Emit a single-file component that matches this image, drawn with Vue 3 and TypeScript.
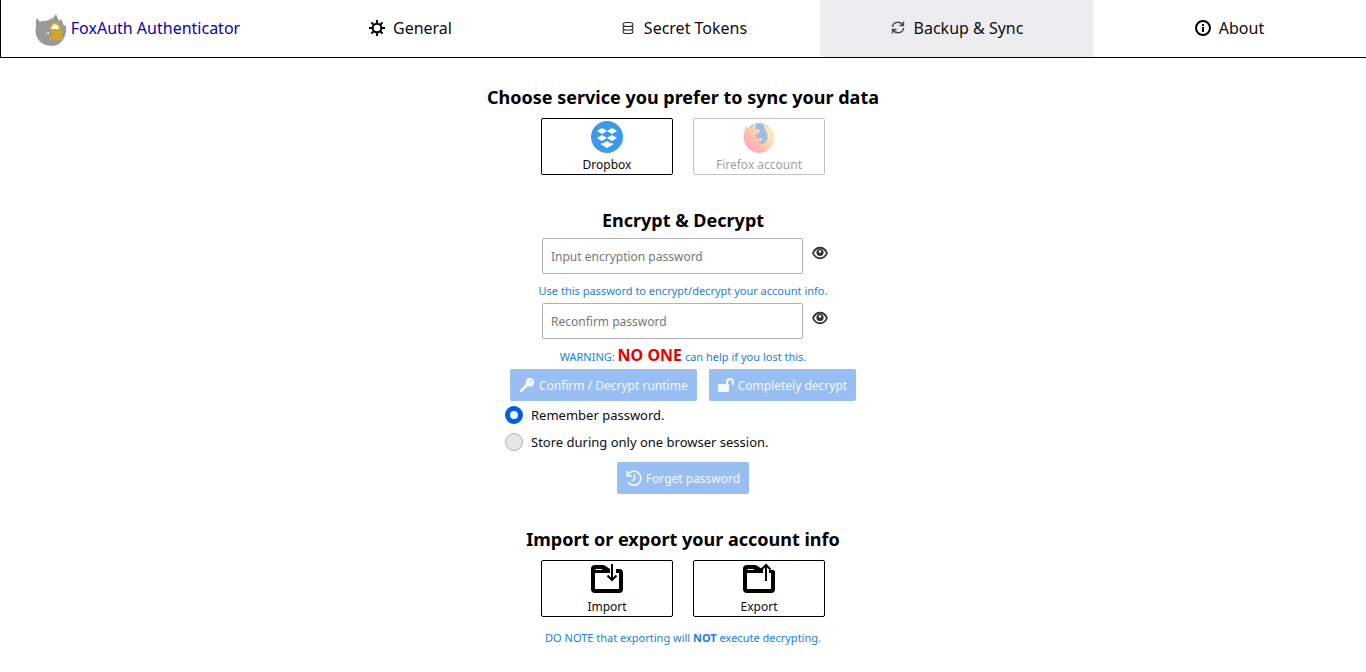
<script setup lang="ts">
import { ref } from 'vue'

const password = ref('')
const confirmation = ref('')
const storage = ref<'remember' | 'session'>('remember')
const shown = ref({ password: false, confirmation: false })
</script>

<template>
  <div class="page">
    <nav class="nav">
      <a class="brand" href="#home">
        <svg class="logo" viewBox="0 0 32 32" aria-hidden="true">
          <path fill="#999" d="M2 4 5 8Q8 6 11 7L18 4 17 8Q18 3 21 0Q22 3 24 7L26 5Q28 8 29 12L31 11Q32 17 30 22Q26 32 16 32Q5 32 1 21Q0 16 1 11Q0 8 2 4Z" />
          <path fill="#fff" d="M16 15Q17 10 20 10Q24 11 24 15ZM11 19 14 18V20Z" />
          <path fill="none" stroke="#d7a51b" stroke-width="2" d="M15 15V14Q16 9 20 9Q25 9 25 15V17" />
          <path fill="#d7a51b" d="M18 15H26Q27 15 27 17V26H14V23L18 21V19L14 18Z" />
        </svg>
        <span>FoxAuth Authenticator</span>
      </a>
      <a class="tab" href="#general">
        <svg class="icon" viewBox="0 0 16 16" aria-hidden="true">
          <g fill="none" stroke="#000" stroke-width="2">
            <circle cx="8" cy="8" r="4.300" />
            <path d="M8 0v4M8 12v4M0 8h4M12 8h4M2.400 2.400l2.800 2.800M10.800 10.800l2.800 2.800M13.600 2.400l-2.800 2.800M5.200 10.800l-2.800 2.800" />
          </g>
        </svg>
        <span>General</span>
      </a>
      <a class="tab" href="#tokens">
        <svg class="icon" viewBox="0 0 16 16" aria-hidden="true">
          <g fill="none" stroke="#222" stroke-width="1.1">
            <rect x="3" y="2.500" width="10" height="4" rx="4" ry="2" />
            <path d="M4 6C2.500 7 2.500 10 6 10h4c3.500 0 3.500-3 2-4M4 9.400C2.500 11 2.500 13.500 6 13.500h4c3.500 0 3.500-2.500 2-4.100" />
          </g>
        </svg>
        <span>Secret Tokens</span>
      </a>
      <a class="tab active" href="#backup" aria-current="page">
        <svg class="icon" viewBox="0 0 16 16" aria-hidden="true">
          <g fill="none" stroke="#444" stroke-width="1.4">
            <path d="M2.500 7C3 1.500 10 .8 13 5M13.500 1.500V5.500H9.500M13.500 8C13 13.500 6 14.200 3 10M2.500 13.500v-4h4" />
          </g>
        </svg>
        <span>Backup &amp; Sync</span>
      </a>
      <a class="tab" href="#about">
        <svg class="icon" viewBox="0 0 16 16" aria-hidden="true">
          <circle cx="8" cy="8" r="7" fill="none" stroke="#000" stroke-width="2" />
          <path fill="#000" d="M7 4h2v2H7zM7 7h2v5H7z" />
        </svg>
        <span>About</span>
      </a>
    </nav>

    <main class="content">
      <section>
        <h2>Choose service you prefer to sync your data</h2>
        <div class="cards">
          <button class="card" type="button">
            <svg class="card-icon" viewBox="0 0 32 32" aria-hidden="true">
              <circle cx="16" cy="16" r="16" fill="#3d9ae8" />
              <path fill="#fff" d="M11 7 16 10 11 13 6 10ZM21 7 26 10 21 13 16 10ZM11 14 16 17 11 20 6 17ZM21 14 26 17 21 20 16 17ZM10 22 12 22.500 16 20 20 22.500 22 22V23.500L16 27 10 23.500Z" />
            </svg>
            <span>Dropbox</span>
          </button>
          <button class="card" type="button" disabled>
            <svg class="card-icon" viewBox="0 0 32 32" aria-hidden="true">
              <defs>
                <linearGradient id="fox" x1="0.9" y1="0.1" x2="0.15" y2="0.8">
                  <stop offset="0" stop-color="#ffe23a" />
                  <stop offset="0.4" stop-color="#ffb52c" />
                  <stop offset="0.7" stop-color="#ff5f30" />
                  <stop offset="1" stop-color="#f52b60" />
                </linearGradient>
              </defs>
              <circle cx="16" cy="15" r="13" fill="#0b62cc" />
              <path fill="url(#fox)" d="M3 5Q4 7 6 7L9 6Q11 3 13 3L12 8 17 9 16 12 13 14Q11 17 15 18Q18 16 20 18Q18 21 14 21Q21 26 24 19Q26 13 22 8Q20 4 21 1Q22 5 25 6Q27 8 28 11L29 8Q33 15 30 22Q26 32 16 32Q5 31 1 20Q0 12 3 5Z" />
            </svg>
            <span>Firefox account</span>
          </button>
        </div>
      </section>

      <section class="crypto">
        <h2>Encrypt &amp; Decrypt</h2>
        <form class="form" @submit.prevent>
          <div class="field">
            <input v-model="password" :type="shown.password ? 'text' : 'password'" placeholder="Input encryption password" aria-label="Input encryption password" />
            <button class="eye" type="button" aria-label="Show password" @click="shown.password = !shown.password">
              <svg viewBox="0 0 16 14" aria-hidden="true">
                <path fill="none" stroke="#333" stroke-width="1.800" d="M1 7C4 0 12 0 15 7 12 14 4 14 1 7Z" />
                <circle cx="8" cy="6.500" r="3.600" fill="#333" />
                <circle cx="8" cy="5.500" r="1.200" fill="#fff" />
              </svg>
            </button>
          </div>
          <p class="hint">Use this password to encrypt/decrypt your account info.</p>
          <div class="field">
            <input v-model="confirmation" :type="shown.confirmation ? 'text' : 'password'" placeholder="Reconfirm password" aria-label="Reconfirm password" />
            <button class="eye" type="button" aria-label="Show reconfirmed password" @click="shown.confirmation = !shown.confirmation">
              <svg viewBox="0 0 16 14" aria-hidden="true">
                <path fill="none" stroke="#333" stroke-width="1.800" d="M1 7C4 0 12 0 15 7 12 14 4 14 1 7Z" />
                <circle cx="8" cy="6.500" r="3.600" fill="#333" />
                <circle cx="8" cy="5.500" r="1.200" fill="#fff" />
              </svg>
            </button>
          </div>
          <p class="hint warning">WARNING: <strong>NO ONE</strong> can help if you lost this.</p>
          <div class="actions">
            <button class="action" type="submit" disabled>
              <svg viewBox="0 0 16 16" aria-hidden="true">
                <path fill="currentColor" fill-rule="evenodd" d="M8 2Q12-1 15 3 16 8 12 10L9 9 3 15H1V13L7 7Q6 4 8 2ZM12.500 3a.8 .8 0 1 0 0 1.600.8 .8 0 0 0 0-1.600Z" />
              </svg>
              <span>Confirm / Decrypt runtime</span>
            </button>
            <button class="action" type="button" disabled>
              <svg viewBox="0 0 16 16" aria-hidden="true">
                <path fill="currentColor" d="M1 7H10Q11 7 11 8V14Q11 15 10 15H1Q0 15 0 14V8Q0 7 1 7Z" />
                <path fill="none" stroke="currentColor" stroke-width="2" d="M9 8V5Q9 2 12 2T15 5V8" />
              </svg>
              <span>Completely decrypt</span>
            </button>
          </div>
          <label class="choice"><input v-model="storage" type="radio" name="storage" value="remember" /><span>Remember password.</span></label>
          <label class="choice"><input v-model="storage" type="radio" name="storage" value="session" /><span>Store during only one browser session.</span></label>
          <div class="actions forget">
            <button class="action" type="button" disabled>
              <svg viewBox="0 0 16 16" aria-hidden="true">
                <path fill="none" stroke="currentColor" stroke-width="1.600" d="M1 1v5h5M1.500 5.500A7 7 0 1 1 2 12M8.500 4.500V9L6 11" />
              </svg>
              <span>Forget password</span>
            </button>
          </div>
        </form>
      </section>

      <section>
        <h2>Import or export your account info</h2>
        <div class="cards">
          <button class="card" type="button">
            <svg class="card-icon" viewBox="0 0 32 32" aria-hidden="true">
              <path fill="#000" fill-rule="evenodd" d="M4 2H12Q14 2 16 4L19 6V10H4V26H28V10H25V6H28Q32 6 32 10V26Q32 30 28 30H4Q0 30 0 26V6Q0 2 4 2ZM4 7H12L10 6H5Z" />
              <path fill="none" stroke="#000" stroke-width="2" d="M21 1v16M16.500 12.500 21 17l4.500-4.500" />
            </svg>
            <span>Import</span>
          </button>
          <button class="card" type="button">
            <svg class="card-icon" viewBox="0 0 32 32" aria-hidden="true">
              <path fill="#000" fill-rule="evenodd" d="M4 2H12Q14 2 16 4L19 6H20V10H4V26H28V10H26V7H28Q32 6 32 10V26Q32 30 28 30H4Q0 30 0 26V6Q0 2 4 2ZM4 7H12L10 6H5Z" />
              <path fill="none" stroke="#000" stroke-width="2" d="M23 18V2M18.500 6.500 23 2l4.500 4.500" />
            </svg>
            <span>Export</span>
          </button>
        </div>
        <p class="hint note">DO NOTE that exporting will <strong>NOT</strong> execute decrypting.</p>
      </section>
    </main>
  </div>
</template>

<style>
body {
  margin: 0;
  background: #fff;
}
</style>

<style scoped>
.page {
  color: #0c0c0d;
  font-family: "Noto Sans", "Open Sans", sans-serif;
  font-size: 12px;
}
.nav {
  display: grid;
  grid-template-columns: repeat(5, 1fr);
  height: 57px;
  border-bottom: 1px solid #000;
  border-left: 1px solid #000;
  font-size: 16px;
}
.nav a {
  display: flex;
  align-items: center;
  justify-content: center;
  padding-bottom: 2px;
  color: #0c0c0d;
  text-decoration: none;
  white-space: nowrap;
}
.nav .brand {
  gap: 4px;
  color: #0d00b8;
}
.logo {
  width: 32px;
  height: 32px;
  margin-top: 4px;
}
.tab {
  gap: 8px;
  border-radius: 0 0 3px 3px;
}
.nav .active {
  background: #ededf0;
}
.icon {
  width: 16px;
  height: 16px;
}
.content {
  display: flex;
  flex-direction: column;
  gap: 33px;
  padding-top: 27px;
}
h2 {
  margin: 0 0 8px;
  color: #000;
  font-size: 18px;
  line-height: 25px;
  text-align: center;
}
.crypto h2 {
  margin-bottom: 5px;
}
button,
input {
  font: inherit;
}
.cards {
  display: flex;
  justify-content: center;
  gap: 20px;
}
.card {
  display: flex;
  flex-direction: column;
  align-items: center;
  box-sizing: border-box;
  width: 132px;
  height: 57px;
  padding: 2px 0 0;
  border: 1px solid #000;
  border-radius: 2px;
  background: #fff;
  color: #0c0c0d;
  line-height: 24px;
}
.card:disabled {
  opacity: 0.4;
  border-color: #666;
}
.card-icon {
  width: 32px;
  height: 32px;
  flex: none;
}
.form {
  display: flex;
  flex-direction: column;
  width: 356px;
  margin: 0 auto;
}
.field {
  display: flex;
  justify-content: center;
  gap: 9px;
  padding-left: 4px;
}
.field input {
  box-sizing: border-box;
  width: 261px;
  height: 36px;
  padding: 0 8px;
  border: 1px solid #b1b1b3;
  border-radius: 2px;
  background: #fff;
}
.field input::placeholder {
  color: #777;
  opacity: 1;
}
.eye {
  display: flex;
  width: 16px;
  height: 30px;
  padding: 0;
  align-items: center;
  border: 0;
  background: none;
}
.eye svg {
  width: 16px;
  height: 14px;
}
.hint {
  margin: 0;
  padding-top: 4px;
  color: #1680e4;
  font-size: 11px;
  line-height: 25px;
  text-align: center;
}
.warning {
  padding-top: 5px;
}
.warning strong {
  color: #e60000;
  font-size: 16px;
  line-height: 20px;
}
.actions {
  display: flex;
  justify-content: center;
  gap: 12px;
}
.action {
  display: flex;
  align-items: center;
  gap: 4px;
  height: 32px;
  padding: 0 9px;
  border: 0;
  border-radius: 2px;
  background: #99bef3;
  color: #f4f8ff;
  white-space: nowrap;
}
.action svg {
  width: 16px;
  height: 16px;
}
.choice {
  display: flex;
  align-items: center;
  gap: 8px;
  height: 27px;
  font-size: 13px;
}
.choice input {
  appearance: none;
  box-sizing: border-box;
  width: 18px;
  height: 18px;
  margin: 0;
  border: 1px solid #b1b1b3;
  border-radius: 50%;
  background: #e6e6e6;
}
.choice input:checked {
  border: 5px solid #0060df;
  background: #fff;
}
.forget {
  margin-top: 7px;
}
.note {
  padding-top: 8px;
}
</style>
